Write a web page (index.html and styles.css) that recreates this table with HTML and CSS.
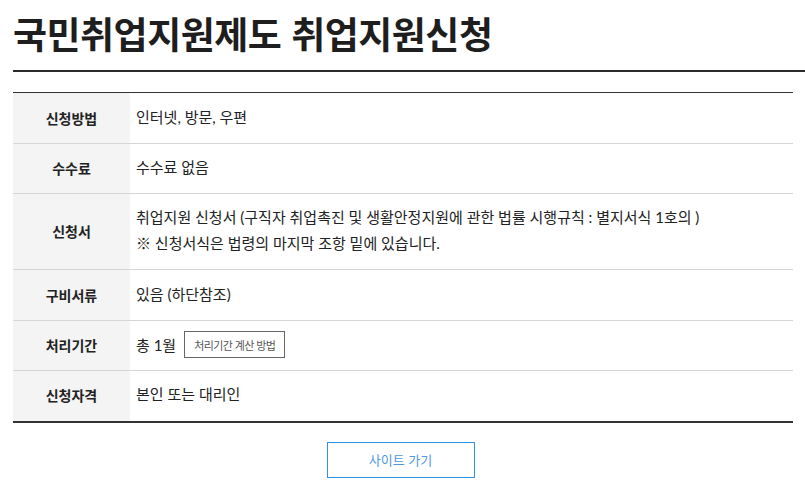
FILE: index.html
```html
<!DOCTYPE html>
<html lang="ko">
<head>
<meta charset="utf-8">
<link rel="stylesheet" href="styles.css">
</head>
<body>
<div class="page">
  <h1 class="title">국민취업지원제도 취업지원신청</h1>
  <table class="info">
    <tr><th>신청방법</th><td>인터넷, 방문, 우편</td></tr>
    <tr class="short"><th>수수료</th><td>수수료 없음</td></tr>
    <tr class="tall"><th>신청서</th><td>취업지원 신청서 (구직자 취업촉진 및 생활안정지원에 관한 법률 시행규칙 : 별지서식 1호의 )<br>※ 신청서식은 법령의 마지막 조항 밑에 있습니다.</td></tr>
    <tr><th>구비서류</th><td>있음 (하단참조)</td></tr>
    <tr class="short"><th>처리기간</th><td><span class="period">총 1월</span><button class="calc" type="button">처리기간 계산 방법</button></td></tr>
    <tr><th>신청자격</th><td>본인 또는 대리인</td></tr>
  </table>
  <div class="actions"><button class="go" type="button">사이트 가기</button></div>
</div>
</body>
</html>
```
FILE: styles.css
```css
* { box-sizing: border-box; }
html, body { margin: 0; padding: 0; background: #fff; }
body {
  font-family: Lato, "Noto Sans CJK KR", sans-serif;
  color: #222;
  overflow: hidden;
}
.page { padding: 0 12px 0 13px; }
.title {
  margin: 0;
  padding-top: 5px;
  height: 72px;
  font-family: "Noto Sans CJK KR", sans-serif;
  font-size: 37px;
  font-weight: 700;
  letter-spacing: -0.5px;
  line-height: 56px;
  color: #1e1e1e;
  border-bottom: 2px solid #2b2b2b;
  margin-right: -12px;
}
.info {
  margin-top: 20px;
  width: 780px;
  border-collapse: collapse;
  border-top: 1px solid #333;
  border-bottom: 2px solid #333;
}
.info th, .info td {
  border-bottom: 1px solid #d6d6d6;
  height: 51px;
  padding: 0 0 1px;
  vertical-align: middle;
}
.info tr.short th, .info tr.short td { height: 50px; }
.info tr.tall th, .info tr.tall td { height: 76px; }
.info tr:last-child th, .info tr:last-child td { border-bottom: 0; }
.info th {
  width: 117px;
  background: #f4f4f4;
  font-family: "Noto Sans CJK KR", sans-serif;
  font-size: 14px;
  font-weight: 700;
  color: #222;
  text-align: center;
}
.info td {
  padding: 0 0 3px 6px;
  font-size: 15px;
  line-height: 26px;
  color: #222;
}
.period { vertical-align: middle; }
.calc {
  margin-left: 8px;
  height: 27px;
  padding: 0 9px;
  border: 1px solid #666;
  background: #fff;
  font-family: "Noto Sans CJK KR", sans-serif;
  font-size: 11px;
  letter-spacing: -0.6px;
  color: #555;
  vertical-align: middle;
}
.actions {
  display: flex;
  justify-content: center;
  padding-top: 19px;
}
.go {
  width: 148px;
  height: 36px;
  border: 1px solid #2d93ea;
  background: #fff;
  font-family: "Noto Sans CJK KR", sans-serif;
  font-size: 13px;
  color: #4f97e6;
  margin-right: 5px;
}
```
